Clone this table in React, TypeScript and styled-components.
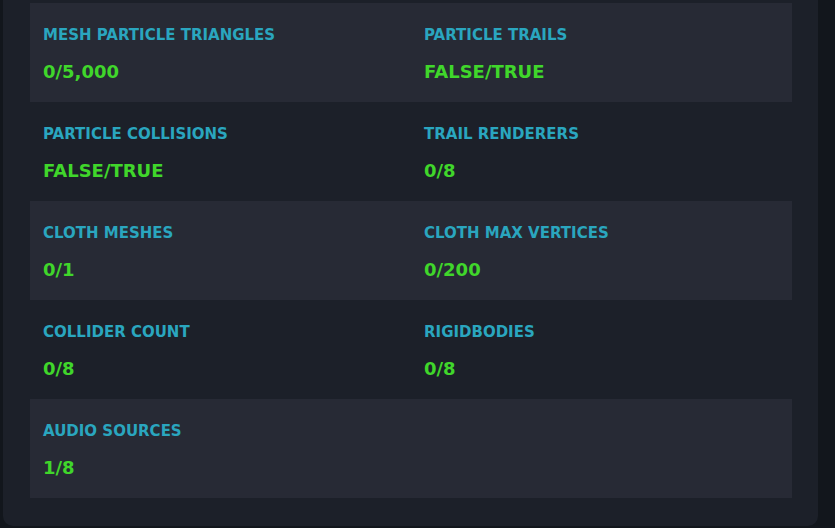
import React from 'react';
import styled, { createGlobalStyle } from 'styled-components';

const GlobalStyle = createGlobalStyle`
  html, body {
    margin: 0;
    padding: 0;
    background-color: #12161c;
    font-family: 'DejaVu Sans', 'Liberation Sans', sans-serif;
    overflow: hidden;
  }
`;

const Page = styled.div`
  width: 835px;
  height: 528px;
  padding: 0 17px 0 3px;
  box-sizing: border-box;
`;

const Panel = styled.section`
  background-color: #1c2029;
  border-radius: 0 0 10px 10px;
  padding: 3px 26px 28px 27px;
`;

const StatRow = styled.div<{ shaded: boolean }>`
  display: grid;
  grid-template-columns: 1fr 1fr;
  height: 99px;
  background-color: ${({ shaded }) => (shaded ? '#272a35' : 'transparent')};
`;

const Stat = styled.div`
  display: flex;
  flex-direction: column;
  gap: 17px;
  padding: 23px 13px 0;
`;

const Label = styled.div`
  font-size: 15px;
  line-height: 18px;
  font-weight: 700;
  color: #2aa6bf;
  text-transform: uppercase;
`;

const Value = styled.div`
  font-size: 18px;
  line-height: 22px;
  font-weight: 700;
  color: #40d62b;
`;

interface StatItem {
  label: string;
  value: string;
}

const rows: StatItem[][] = [
  [
    { label: 'Mesh Particle Triangles', value: '0/5,000' },
    { label: 'Particle Trails', value: 'FALSE/TRUE' },
  ],
  [
    { label: 'Particle Collisions', value: 'FALSE/TRUE' },
    { label: 'Trail Renderers', value: '0/8' },
  ],
  [
    { label: 'Cloth Meshes', value: '0/1' },
    { label: 'Cloth Max Vertices', value: '0/200' },
  ],
  [
    { label: 'Collider Count', value: '0/8' },
    { label: 'Rigidbodies', value: '0/8' },
  ],
  [{ label: 'Audio Sources', value: '1/8' }],
];

const App: React.FC = () => (
  <>
    <GlobalStyle />
    <Page>
      <Panel>
        {rows.map((row, i) => (
          <StatRow key={i} shaded={i % 2 === 0}>
            {row.map((stat) => (
              <Stat key={stat.label}>
                <Label>{stat.label}</Label>
                <Value>{stat.value}</Value>
              </Stat>
            ))}
          </StatRow>
        ))}
      </Panel>
    </Page>
  </>
);

export default App;
